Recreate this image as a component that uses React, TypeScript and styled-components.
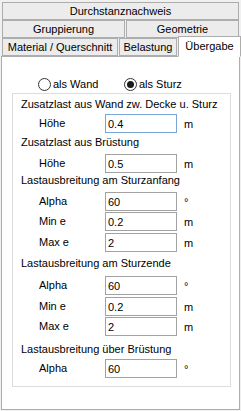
import React from 'react'
import styled, { createGlobalStyle } from 'styled-components'

const GlobalStyle = createGlobalStyle`
	body {
		margin: 0;
		background: #f0f0f0;
		font-family: "Liberation Sans", Arial, sans-serif;
		font-size: 11px;
		color: #000;
	}
`

const Window = styled.div`
	width: 241px;
	height: 411px;
	background: #f0f0f0;
	overflow: hidden;
`
const TabStrip = styled.div`
	padding: 2px 0 0 2px;
`
const TabRow = styled.div`
	display: flex;
	align-items: flex-end;
	gap: 1px;
	height: 18px;
`
const Tab = styled.div<{ $width: number; $active?: boolean }>`
	box-sizing: border-box;
	width: ${p => p.$width}px;
	height: ${p => (p.$active ? 21 : 18)}px;
	margin-bottom: ${p => (p.$active ? -1 : 0)}px;
	position: ${p => (p.$active ? 'relative' : 'static')};
	z-index: ${p => (p.$active ? 1 : 0)};
	display: flex;
	justify-content: center;
	align-items: ${p => (p.$active ? 'flex-start' : 'center')};
	padding-top: ${p => (p.$active ? 3 : 0)}px;
	border: 1px solid #adadad;
	border-bottom-color: ${p => (p.$active ? '#fff' : '#adadad')};
	background: ${p => (p.$active ? '#fff' : '#ececec')};
	line-height: 13px;
	white-space: nowrap;
`
const Panel = styled.div`
	box-sizing: border-box;
	width: 239px;
	height: 354px;
	margin-left: 1px;
	background: #fff;
	border: 1px solid #adadad;
	padding-top: 21px;
`
const RadioRow = styled.div`
	display: flex;
	padding-left: 36px;
	height: 13px;
`
const RadioOption = styled.label`
	display: flex;
	align-items: center;
	gap: 2px;
	width: 86px;
	line-height: 13px;
`
const RadioCircle = styled.span<{ $checked?: boolean }>`
	box-sizing: border-box;
	width: 13px;
	height: 13px;
	border: 1px solid #333;
	border-radius: 50%;
	background: #fff;
	display: flex;
	align-items: center;
	justify-content: center;
	&::after {
		content: '';
		width: 7px;
		height: 7px;
		border-radius: 50%;
		background: ${p => (p.$checked ? '#1a1a1a' : 'transparent')};
	}
`
const GroupBox = styled.div`
	box-sizing: border-box;
	width: 219px;
	height: 294px;
	margin: 2px 0 0 10px;
	border: 1px solid #dcdcdc;
	padding-left: 8px;
`
const Heading = styled.div<{ $mt: number }>`
	margin-top: ${p => p.$mt}px;
	line-height: 13px;
	height: 13px;
	white-space: nowrap;
`
const FieldRow = styled.div<{ $mt: number }>`
	display: flex;
	align-items: center;
	height: 19px;
	margin-top: ${p => p.$mt}px;
`
const FieldLabel = styled.span`
	width: 66px;
	padding-left: 18px;
	line-height: 13px;
`
const Input = styled.input<{ $focus?: boolean }>`
	box-sizing: border-box;
	width: 72px;
	height: 19px;
	margin: 0;
	padding: 0 2px;
	border: 1px solid ${p => (p.$focus ? '#7aa7d8' : '#a2a2a2')};
	outline: none;
	font: inherit;
	font-size: 11px;
	color: #000;
	background: #fff;
`
const Unit = styled.span`
	margin-left: 7px;
	margin-top: 2px;
	line-height: 13px;
`

type Item =
	| { kind: 'h'; text: string; mt: number }
	| { kind: 'f'; label: string; value: string; unit: string; mt: number; focus?: boolean }

const items: Item[] = [
	{ kind: 'h', text: 'Zusatzlast aus Wand zw. Decke u. Sturz', mt: 4 },
	{ kind: 'f', label: 'Höhe', value: '0.4', unit: 'm', mt: 3, focus: true },
	{ kind: 'h', text: 'Zusatzlast aus Brüstung', mt: 3 },
	{ kind: 'f', label: 'Höhe', value: '0.5', unit: 'm', mt: 5 },
	{ kind: 'h', text: 'Lastausbreitung am Sturzanfang', mt: 1 },
	{ kind: 'f', label: 'Alpha', value: '60', unit: '°', mt: 5 },
	{ kind: 'f', label: 'Min e', value: '0.2', unit: 'm', mt: 1 },
	{ kind: 'f', label: 'Max e', value: '2', unit: 'm', mt: 2 },
	{ kind: 'h', text: 'Lastausbreitung am Sturzende', mt: 5 },
	{ kind: 'f', label: 'Alpha', value: '60', unit: '°', mt: 6 },
	{ kind: 'f', label: 'Min e', value: '0.2', unit: 'm', mt: 2 },
	{ kind: 'f', label: 'Max e', value: '2', unit: 'm', mt: 1 },
	{ kind: 'h', text: 'Lastausbreitung über Brüstung', mt: 7 },
	{ kind: 'f', label: 'Alpha', value: '60', unit: '°', mt: 3 },
]

export default function App() {
	return (
		<Window>
			<GlobalStyle />
			<TabStrip>
				<TabRow>
					<Tab $width={237}>Durchstanznachweis</Tab>
				</TabRow>
				<TabRow>
					<Tab $width={123}>Gruppierung</Tab>
					<Tab $width={113}>Geometrie</Tab>
				</TabRow>
				<TabRow>
					<Tab $width={116}>Material / Querschnitt</Tab>
					<Tab $width={58}>Belastung</Tab>
					<Tab $width={63} $active>Übergabe</Tab>
				</TabRow>
			</TabStrip>
			<Panel>
				<RadioRow>
					<RadioOption><RadioCircle />als Wand</RadioOption>
					<RadioOption><RadioCircle $checked />als Sturz</RadioOption>
				</RadioRow>
				<GroupBox>
					{items.map((it, i) =>
						it.kind === 'h' ? (
							<Heading key={i} $mt={it.mt}>{it.text}</Heading>
						) : (
							<FieldRow key={i} $mt={it.mt}>
								<FieldLabel>{it.label}</FieldLabel>
								<Input $focus={it.focus} defaultValue={it.value} />
								<Unit>{it.unit}</Unit>
							</FieldRow>
						)
					)}
				</GroupBox>
			</Panel>
		</Window>
	)
}
